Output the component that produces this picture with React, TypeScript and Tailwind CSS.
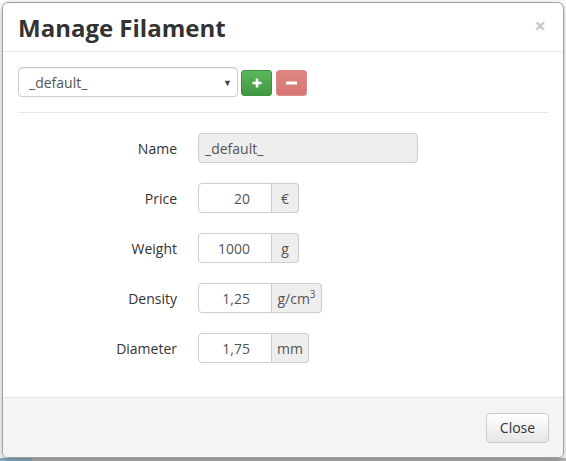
import React from 'react';

const font = { fontFamily: '"Open Sans", "Liberation Sans", sans-serif' };

type Row = { label: string; value: string; unit?: React.ReactNode; unitWidth?: string };

const rows: Row[] = [
  { label: 'Price', value: '20', unit: '€', unitWidth: 'w-[27px]' },
  { label: 'Weight', value: '1000', unit: 'g', unitWidth: 'w-[27px]' },
  {
    label: 'Density',
    value: '1,25',
    unit: (
      <span>
        g/cm<sup className="text-[10px] top-[-6px]">3</sup>
      </span>
    ),
    unitWidth: 'w-[50px]',
  },
  { label: 'Diameter', value: '1,75', unit: 'mm', unitWidth: 'w-[37px]' },
];

const FormRow: React.FC<{ label: string; children: React.ReactNode }> = ({ label, children }) => (
  <div className="flex items-center h-[30px]">
    <label className="w-[160px] text-right text-[14px] text-[#333] pr-[1px]">{label}</label>
    <div className="ml-[20px] flex">{children}</div>
  </div>
);

export default function App() {
  return (
    <div className="relative w-[566px] h-[461px] bg-white overflow-hidden" style={font}>
      {/* page behind the overlay */}
      <div className="absolute left-0 right-0 bottom-0 h-[3px] flex">
        <div className="w-[32px] bg-[#8fb3c7]" />
        <div className="flex-1 bg-[#bbbbbb]" />
      </div>

      {/* modal */}
      <div className="relative ml-[2px] mt-[2px] w-[562px] h-[456px] bg-white border border-[#a0a0a0] rounded-[6px] shadow-[0_3px_9px_rgba(0,0,0,0.3)] flex flex-col overflow-hidden">
        {/* header */}
        <div className="h-[49px] shrink-0 flex items-center justify-between px-[15px] border-b border-[#e5e5e5]">
          <h4 className="text-[24px] font-bold leading-none text-[#333] pt-[1px]">Manage Filament</h4>
          <button className="text-[20px] font-bold leading-none text-[#c8c8c8] -mt-[2px] mr-[2px]">×</button>
        </div>

        {/* body */}
        <div className="flex-1 px-[15px] pt-[15px]">
          <div className="flex items-center">
            <div className="relative w-[220px] h-[30px] border border-[#ccc] rounded-[4px] shadow-[inset_0_1px_1px_rgba(0,0,0,0.075)] flex items-center pl-[10px] text-[14px] text-[#555]">
              _default_
              <span className="absolute right-[5px] top-[8px] text-[9px] text-[#444]">▼</span>
            </div>
            <button className="ml-[3px] w-[31px] h-[26px] mt-[2px] rounded-[3px] border border-[#3e8f3e] bg-gradient-to-b from-[#5cb85c] to-[#419641] flex items-center justify-center">
              <svg width="10" height="10" viewBox="0 0 10 10">
                <path d="M5 0.5v9M0.5 5h9" stroke="white" strokeWidth="2.6" />
              </svg>
            </button>
            <button className="ml-[4px] w-[31px] h-[26px] mt-[2px] rounded-[3px] border border-[#dc8c89] bg-gradient-to-b from-[#e08581] to-[#d57571] flex items-center justify-center">
              <svg width="11" height="4" viewBox="0 0 11 4">
                <rect x="0" y="0.5" width="11" height="3" fill="white" />
              </svg>
            </button>
          </div>

          <div className="mt-[15px] border-t border-[#e5e5e5]" />

          <div className="mt-[20px] flex flex-col gap-[20px]">
            <FormRow label="Name">
              <div className="w-[220px] h-[30px] bg-[#eee] border border-[#ccc] rounded-[4px] flex items-center pl-[6px] text-[14px] text-[#555]">
                _default_
              </div>
            </FormRow>
            {rows.map((r) => (
              <FormRow key={r.label} label={r.label}>
                <div className="w-[74px] h-[30px] border border-[#ccc] rounded-l-[4px] flex items-center justify-end pr-[21px] text-[14px] text-[#555] bg-white">
                  {r.value}
                </div>
                <div className={`${r.unitWidth} h-[30px] border-y border-r border-[#ccc] rounded-r-[4px] bg-[#eee] flex items-center justify-center text-[14px] text-[#555]`}>
                  {r.unit}
                </div>
              </FormRow>
            ))}
          </div>
        </div>

        {/* footer */}
        <div className="h-[60px] shrink-0 border-t border-[#e5e5e5] bg-[#f4f4f4] flex items-center justify-end px-[14px]">
          <button className="w-[63px] h-[30px] rounded-[4px] border border-[#ccc] bg-gradient-to-b from-white to-[#e6e6e6] text-[14px] text-[#333] shadow-[0_1px_0_rgba(255,255,255,0.15)]">
            Close
          </button>
        </div>
      </div>
    </div>
  );
}
